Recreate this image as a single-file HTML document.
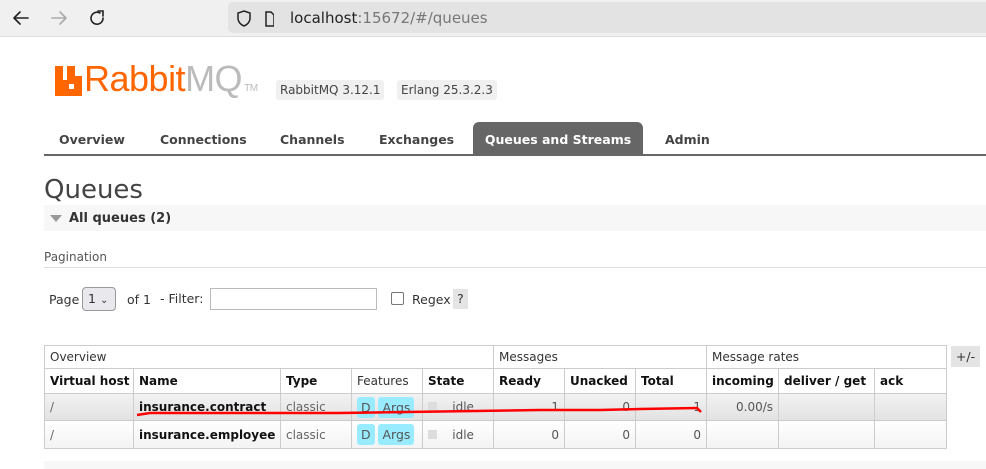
<!DOCTYPE html>
<html><head><style>
*{margin:0;padding:0;box-sizing:border-box}
body{width:986px;height:469px;overflow:hidden;background:#fff;font-family:"DejaVu Sans","Liberation Sans",sans-serif;color:#333;position:relative}
.abs{position:absolute}
.bar{left:0;top:0;width:986px;height:37px;background:#f0f0f0;border-bottom:1px solid #ddd}
.url{left:228px;top:2px;width:770px;height:31px;background:#e3e3e3;border-radius:5px}
.badge{background:#f0f0f0;border-radius:3px;font-size:12px;padding:3px 4px;color:#444}
.tab{top:124px;height:31px;font-size:12.5px;font-weight:bold;color:#444;line-height:31px}
table{border-collapse:collapse;font-size:12px;table-layout:fixed}
td,th{border:1px solid #ccc;padding:0 5px;height:25px;text-align:left;white-space:nowrap;overflow:hidden}
th{font-weight:bold;color:#111}
.g td{font-weight:normal;color:#333}
.r{text-align:right;color:#555}
.pill{background:#99ebff;border-radius:3px;padding:3px 4px;color:#555;font-size:12.5px}
</style></head><body>
<div class="abs bar"></div>
<div class="abs url"></div>
<svg class="abs" style="left:10px;top:8px" width="100" height="20" fill="none" stroke-width="1.6" stroke-linecap="round">
<path d="M4 10h14M4 10l6-6M4 10l6 6" stroke="#222"/>
<path d="M42 10h14M56 10l-6-6M56 10l-6 6" stroke="#aaa"/>
<path d="M90 5a6 6 0 1 0 3 5" stroke="#222"/><path d="M88 3h5v5" stroke="#222"/>
</svg>
<svg class="abs" style="left:234px;top:9px" width="40" height="20" fill="none" stroke="#222" stroke-width="1.5">
<path d="M10 2l6 2v5c0 4-3 7-6 8-3-1-6-4-6-8V4z"/>
<path d="M32 3h5l3 3v11h-8z"/>
</svg>
<div class="abs" style="left:290px;top:9px;font-size:15px;color:#222">localhost<span style="color:#777">:15672/#/queues</span></div>

<svg class="abs" style="left:55px;top:66px" width="27" height="30"><path d="M0 0h8v14h4V0h8v10h7v20H0z" fill="#f60"/><rect x="14" y="18" width="5" height="5" fill="#fff"/></svg>
<div class="abs" style="left:84px;top:58px;font-size:36px;font-family:'Liberation Sans',sans-serif;color:#f60;letter-spacing:-0.5px">Rabbit<span style="color:#bbb">MQ</span><span style="font-size:10px;color:#bbb"> TM</span></div>
<div class="abs badge" style="left:276px;top:80px">RabbitMQ 3.12.1</div>
<div class="abs badge" style="left:397px;top:80px">Erlang 25.3.2.3</div>

<div class="abs tab" style="left:59px">Overview</div>
<div class="abs tab" style="left:160px">Connections</div>
<div class="abs tab" style="left:280px">Channels</div>
<div class="abs tab" style="left:379px">Exchanges</div>
<div class="abs tab" style="left:473px;top:122px;height:33px;line-height:35px;width:170px;background:#666;color:#fff;text-align:center;border-radius:6px 6px 0 0">Queues and Streams</div>
<div class="abs tab" style="left:665px">Admin</div>
<div class="abs" style="left:44px;top:154px;width:942px;height:2px;background:#666"></div>

<div class="abs" style="left:44px;top:175px;font-size:26px;color:#444">Queues</div>
<div class="abs" style="left:44px;top:205px;width:942px;height:26px;background:#f7f7f7"></div>
<div class="abs" style="left:50px;top:215px;width:0;height:0;border-left:6px solid transparent;border-right:6px solid transparent;border-top:7px solid #999"></div>
<div class="abs" style="left:69px;top:211px;font-size:13px;font-weight:bold;color:#333">All queues (2)</div>
<div class="abs" style="left:44px;top:250px;font-size:12px;color:#555">Pagination</div>
<div class="abs" style="left:44px;top:267px;width:942px;height:1px;background:#ddd"></div>

<div class="abs" style="left:49px;top:292px;font-size:12.5px">Page</div>
<div class="abs" style="left:82px;top:287px;width:34px;height:24px;border:1px solid #999;border-radius:4px;background:#e9e9ed;font-size:12.5px;padding:3px 0 0 5px">1 <span style="font-size:10px">&#8964;</span></div>
<div class="abs" style="left:127px;top:292px;font-size:12.5px">of 1</div>
<div class="abs" style="left:160px;top:291px;font-size:12.5px">- Filter:</div>
<div class="abs" style="left:210px;top:288px;width:167px;height:22px;border:1px solid #bbb"></div>
<div class="abs" style="left:391px;top:292px;width:13px;height:13px;border:1.5px solid #777;border-radius:2px"></div>
<div class="abs" style="left:412px;top:292px;font-size:12.5px">Regex</div>
<div class="abs" style="left:453px;top:289px;width:15px;height:20px;background:#e4e4e4;font-size:12.5px;text-align:center;line-height:20px">?</div>

<table class="abs" style="left:44px;top:345px;width:902px">
<colgroup><col style="width:89px"><col style="width:147px"><col style="width:71px"><col style="width:71px"><col style="width:71px"><col style="width:71px"><col style="width:71px"><col style="width:71px"><col style="width:72px"><col style="width:96px"><col style="width:72px"></colgroup>
<tr class="g" style="height:23px"><td colspan="5" style="height:23px">Overview</td><td colspan="3" style="height:23px">Messages</td><td colspan="3" style="height:23px">Message rates</td></tr>
<tr><th>Virtual host</th><th>Name</th><th>Type</th><td>Features</td><th>State</th><th>Ready</th><th>Unacked</th><th>Total</th><th>incoming</th><th>deliver / get</th><th>ack</th></tr>
<tr style="background:linear-gradient(#f2f2f2,#e2e2e2)"><td style="color:#666;height:27px">/</td><th>insurance.contract</th><td style="color:#666">classic</td><td><span class="pill">D</span> <span class="pill">Args</span></td><td><span style="display:inline-block;width:9px;height:9px;background:#ddd"></span> &nbsp;&nbsp; <span style="color:#555">idle</span></td><td class="r">1</td><td class="r">0</td><td class="r">1</td><td class="r">0.00/s</td><td></td><td></td></tr>
<tr style="background:linear-gradient(#fff,#f3f3f3)"><td style="color:#666;height:28px">/</td><th>insurance.employee</th><td style="color:#666">classic</td><td><span class="pill">D</span> <span class="pill">Args</span></td><td><span style="display:inline-block;width:9px;height:9px;background:#ddd"></span> &nbsp;&nbsp; <span style="color:#555">idle</span></td><td class="r">0</td><td class="r">0</td><td class="r">0</td><td></td><td></td><td></td></tr>
</table>
<div class="abs" style="left:951px;top:346px;width:29px;height:21px;background:#e4e4e4;font-size:12.5px;text-align:center;line-height:21px">+/-</div>
<svg class="abs" style="left:0;top:0" width="986" height="469"><polyline points="137,415 150,413 340,413 540,410 600,410 640,409 697,408 701,412" fill="none" stroke="#f00" stroke-width="2.5"/></svg>
<div class="abs" style="left:44px;top:461px;width:942px;height:8px;background:#f7f7f7"></div>
</body></html>
